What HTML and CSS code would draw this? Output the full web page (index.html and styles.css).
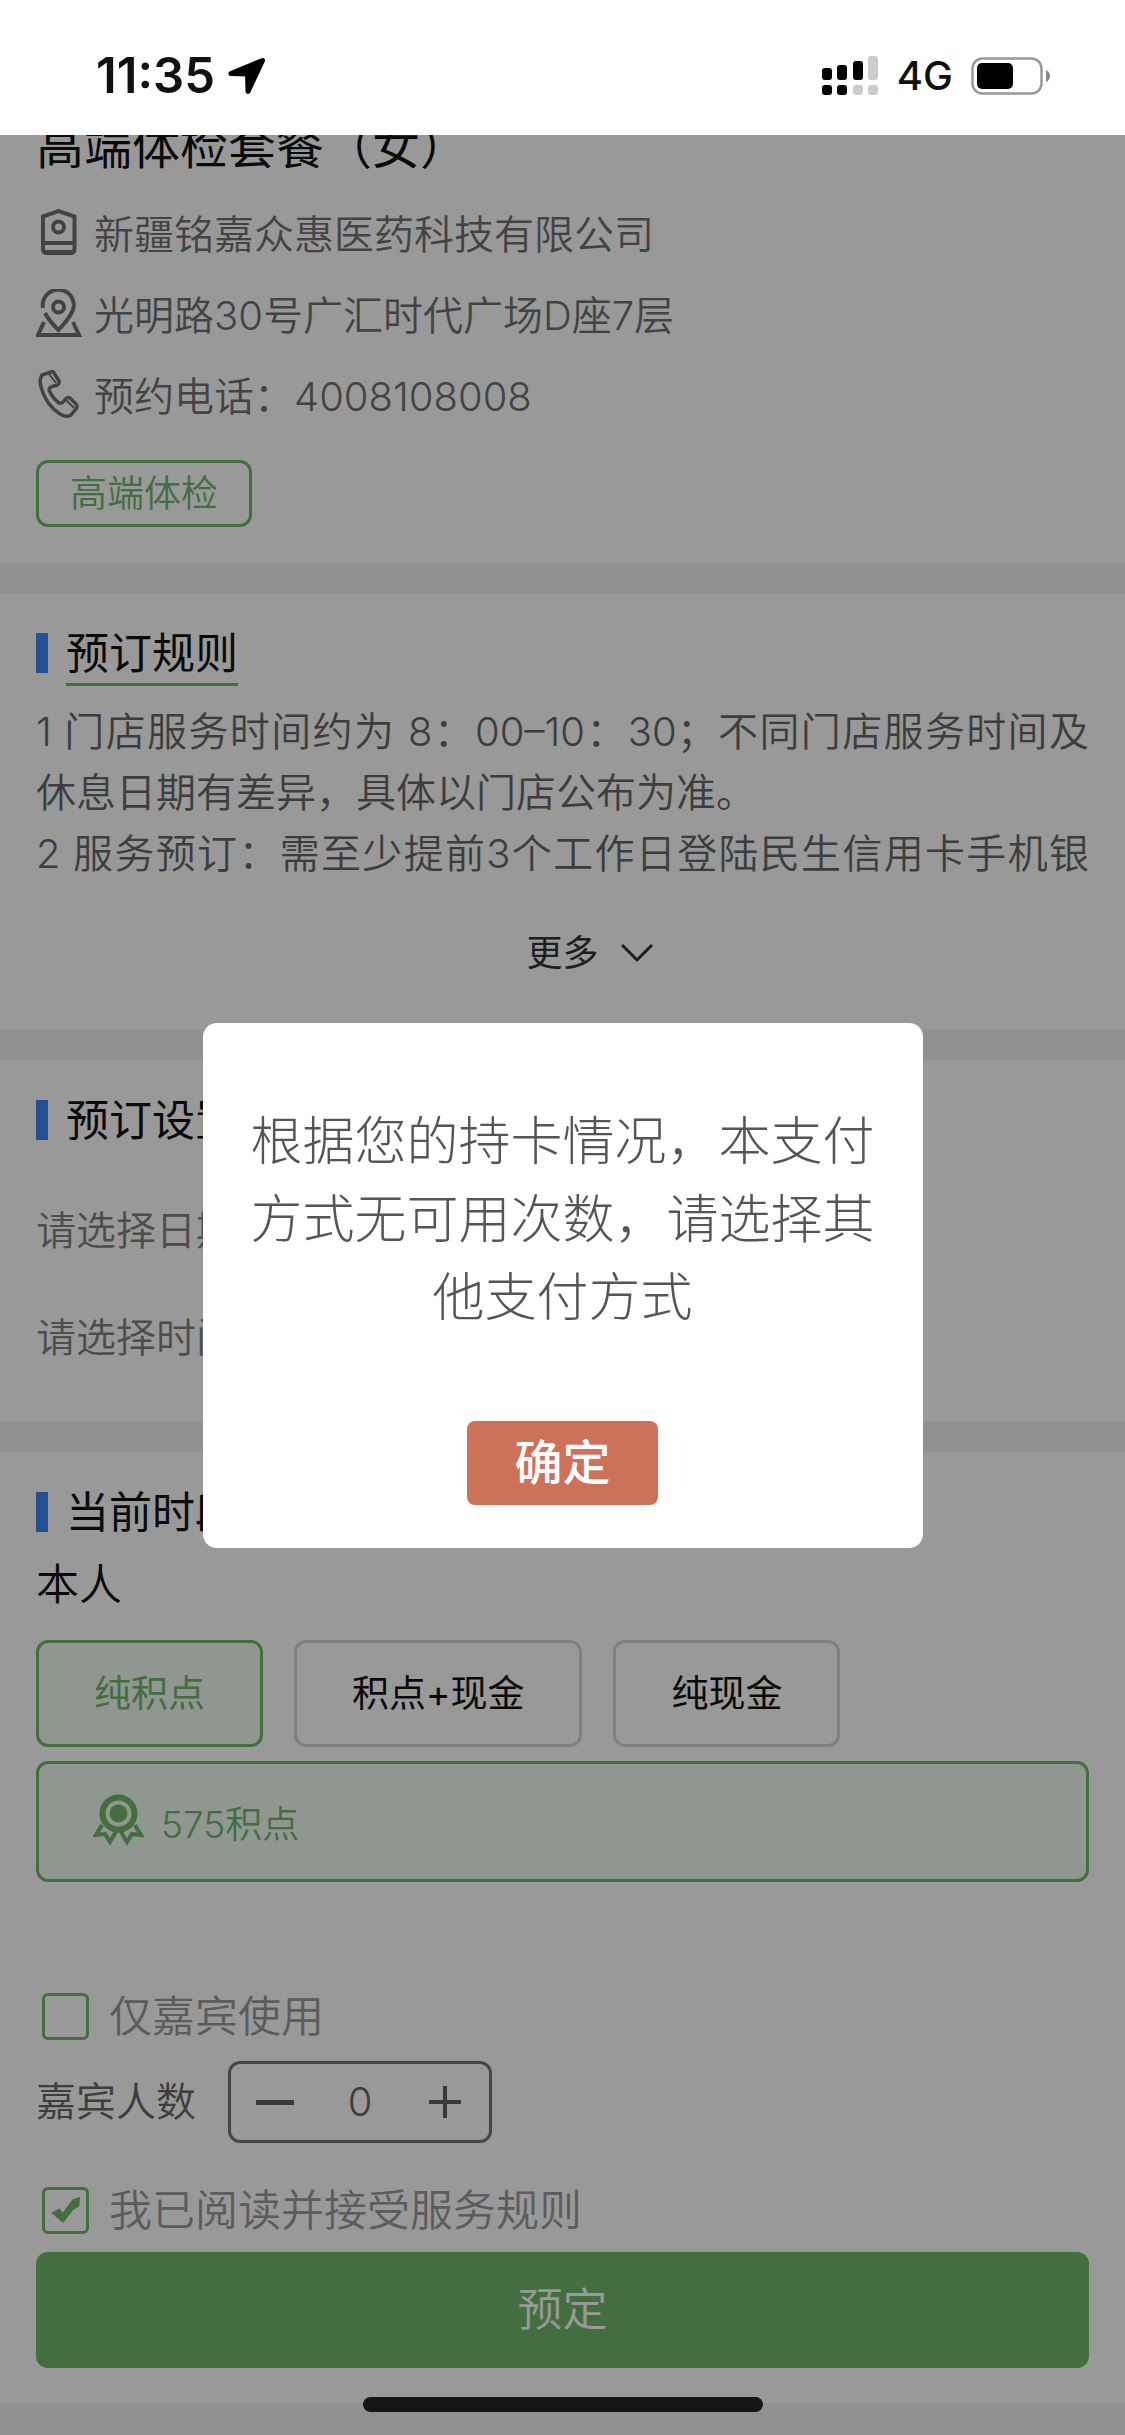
FILE: index.html
```html
<!DOCTYPE html>
<html lang="zh-CN">
<head>
    <meta charset="UTF-8">
    <meta name="viewport" content="width=device-width, initial-scale=1.0">
    <title>高端体检套餐（女）</title>
    <link rel="stylesheet" href="styles.css">
</head>
<body>
    <header class="status-bar">
        <div class="status-left">
            <span class="time">11:35</span>
            <svg width="38" height="38" viewBox="0 0 38 38"><path d="M34.500 3.500L3 16.500L19.500 17L20 34.500Z" fill="#000" stroke="#000" stroke-width="5" stroke-linejoin="round"/></svg>
        </div>
        <div class="status-right">
            <svg width="57" height="40" viewBox="0 0 57 40">
                <g fill="#000">
                    <rect x="0" y="12" width="10" height="12" rx="3"/>
                    <rect x="15" y="9" width="10" height="15" rx="3"/>
                    <rect x="31" y="5" width="10" height="19" rx="3"/>
                    <rect x="0" y="29" width="10" height="10" rx="3"/>
                    <rect x="15" y="29" width="10" height="10" rx="3"/>
                </g>
                <g fill="#ccc">
                    <rect x="46" y="0" width="10" height="24" rx="3"/>
                    <rect x="31" y="29" width="10" height="10" rx="3"/>
                    <rect x="46" y="29" width="10" height="10" rx="3"/>
                </g>
            </svg>
            <span class="network">4G</span>
            <svg width="79" height="38" viewBox="0 0 79 38">
                <rect x="1.5" y="1.5" width="69" height="35" rx="10" fill="none" stroke="#999" stroke-width="2.5"/>
                <rect x="6" y="6" width="36" height="26" rx="5" fill="#000"/>
                <path d="M75 13Q79 15 79 19Q79 23 75 25Z" fill="#888"/>
            </svg>
        </div>
    </header>

    <main>
        <section class="card shop">
            <h1>高端体检套餐（女）</h1>
            <ul class="info">
                <li>
                    <svg width="46" height="48" viewBox="0 0 46 48" fill="none" stroke="#717171" stroke-width="4">
                        <path d="M7 8.500L22.500 3L38.500 8.500V41Q38.500 45 34.500 45H11Q7 45 7 41Z"/>
                        <path d="M7 35H38M9 44H37"/>
                        <circle cx="22.500" cy="19" r="5.500"/>
                    </svg>
                    <span>新疆铭嘉众惠医药科技有限公司</span>
                </li>
                <li>
                    <svg width="46" height="48" viewBox="0 0 46 48" fill="none" stroke="#717171" stroke-width="4">
                        <path d="M7 19A15.500 15.500 0 1 1 35 25Q31 32 22.500 41Q14 33 9 24"/>
                        <circle cx="22.500" cy="18" r="5.500"/>
                        <path d="M8 33L2 46H43L37 33"/>
                    </svg>
                    <span>光明路30号广汇时代广场D座7层</span>
                </li>
                <li>
                    <svg width="46" height="48" viewBox="0 0 46 48" fill="none" stroke="#717171" stroke-width="3.500" stroke-linejoin="round">
                        <path d="M6 5L15 2Q17 1 18 3L23 11Q24 15 18 16Q13 17 13 20Q17 29 23 33Q26 34 28 31Q31 26 34 28L40 34Q42 37 40 39L35 45Q31 48 24 44Q10 35 5 17Q3 10 6 5Z"/>
                        <path d="M13 4L20 13M30 30L38 38" stroke-width="2"/>
                    </svg>
                    <span>预约电话：4008108008</span>
                </li>
            </ul>
            <span class="tag">高端体检</span>
        </section>

        <section class="card rules">
            <h2><span class="underlined">预订规则</span></h2>
            <div class="rules-text">
                <p>1 门店服务时间约为 8：00–10：30；不同门店服务时间及休息日期有差异，具体以门店公布为准。</p>
                <p class="cut">2 服务预订：需至少提前3个工作日登陆民生信用卡手机银</p>
            </div>
            <button class="more" type="button">
                <span class="more-text">更多</span>
                <svg width="34" height="20" viewBox="0 0 34 20" fill="none" stroke="#333" stroke-width="3"><path d="M1 2L16 17L31 2"/></svg>
            </button>
        </section>

        <section class="card setting">
            <h2>预订设置</h2>
            <div class="pickers">
                <button class="picker" type="button">请选择日期</button>
                <button class="picker" type="button">请选择时间</button>
            </div>
        </section>

        <section class="card pay">
            <h2>当前时段</h2>
            <h3>本人</h3>
            <div class="pay-types">
                <button class="pay-type active" type="button">纯积点</button>
                <button class="pay-type" type="button">积点+现金</button>
                <button class="pay-type" type="button">纯现金</button>
            </div>
            <div class="points">
                <svg width="52" height="52" viewBox="0 0 52 52" fill="none" stroke="#6eb76b">
                    <path d="M9 31L3 41L12 40L17 48L24 36" stroke-width="4"/>
                    <path d="M42 31L48 41L39 40L34 48L27 36" stroke-width="4"/>
                    <circle cx="25.500" cy="19.500" r="16" stroke-width="6"/>
                    <circle cx="25.500" cy="19.500" r="9" fill="#6eb76b" stroke="none"/>
                </svg>
                <span>575积点</span>
            </div>

            <label class="check">
                <input type="checkbox">
                <span>仅嘉宾使用</span>
            </label>
            <div class="guests">
                <label for="guestCount">嘉宾人数</label>
                <div class="stepper">
                    <button type="button" aria-label="减少"><svg width="38" height="38" viewBox="0 0 38 38"><path d="M0 19.500H38" stroke="#5f5f5f" stroke-width="5"/></svg></button>
                    <input id="guestCount" type="text" inputmode="numeric" value="0">
                    <button type="button" aria-label="增加"><svg width="38" height="38" viewBox="0 0 38 38"><path d="M3 19H35M19 3V35" stroke="#5f5f5f" stroke-width="4"/></svg></button>
                </div>
            </div>
            <label class="check">
                <input type="checkbox" checked>
                <span>我已阅读并接受服务规则</span>
            </label>
            <button class="submit" type="button">预定</button>
        </section>
    </main>

    <div class="mask">
        <div class="dialog" role="dialog" aria-modal="true">
            <p>根据您的持卡情况，本支付方式无可用次数，请选择其他支付方式</p>
            <button class="confirm" type="button">确定</button>
        </div>
    </div>
    <div class="home-bar"></div>
</body>
</html>
```
FILE: styles.css
```css
* {
    box-sizing: border-box;
}

body {
    margin: 0;
    min-height: 100vh;
    background: #f2f2f2;
    color: #111;
    font-family: Inter, "Noto Sans CJK SC", sans-serif;
    font-size: 40px;
    font-weight: 350;
    line-height: 60px;
}

h1, h2, h3, p, ul {
    margin: 0;
    padding: 0;
    font-weight: inherit;
}

button, input {
    font: inherit;
    color: inherit;
    margin: 0;
    padding: 0;
    border: none;
    background: none;
}

svg {
    display: block;
    flex-shrink: 0;
}

/* Status bar */
.status-bar {
    position: sticky;
    top: 0;
    z-index: 20;
    display: flex;
    justify-content: space-between;
    height: 135px;
    padding: 16px 75px 0 96px;
    background: #fff;
}

.status-left, .status-right {
    display: flex;
    align-items: center;
}

.status-left {
    gap: 13px;
}

.status-right {
    gap: 18px;
}

.time {
    font-size: 49px;
    font-weight: 600;
}

.network {
    font-size: 40px;
    font-weight: 500;
}

/* Sections */
.card {
    padding: 30px 36px;
    margin-bottom: 30px;
    background: #fff;
}

h1 {
    font-size: 48px;
    font-weight: 400;
}

h2 {
    display: flex;
    gap: 18px;
    font-size: 43px;
    font-weight: 400;
}

h2::before {
    content: "";
    width: 12px;
    height: 40px;
    margin-top: 10px;
    background: #3c87f5;
}

.shop {
    margin-top: -18px;
    padding-top: 0;
    padding-bottom: 36px;
}

.info {
    margin: 17px 0 23px;
    list-style: none;
}

.info li {
    display: flex;
    align-items: center;
    gap: 12px;
    height: 81px;
    color: #717171;
}

.info svg {
    margin-bottom: 6px;
}

.tag {
    display: inline-block;
    padding: 0 31px;
    border: 3px solid #6eb76b;
    border-radius: 12px;
    color: #6eb76b;
    font-size: 37px;
    line-height: 61px;
    vertical-align: top;
}

.underlined {
    border-bottom: 3px solid #6eb76b;
}

.rules {
    padding-bottom: 47px;
}

.rules-text {
    margin-top: 15px;
    color: #666;
    line-height: 61px;
    text-align: justify;
}

.cut {
    text-align-last: justify;
}

.more {
    display: grid;
    grid-template-columns: 1fr auto 1fr;
    align-items: center;
    gap: 22px;
    width: 100%;
    margin-top: 39px;
    color: #333;
    font-size: 36px;
    font-weight: 400;
}

.more-text {
    grid-column: 2;
}

.pickers {
    margin-top: 27px;
}

.picker {
    display: block;
    width: 100%;
    height: 107px;
    color: #808080;
    text-align: left;
}

/* Payment */
h3 {
    margin-top: 12px;
    font-size: 43px;
}

.pay-types {
    display: flex;
    gap: 31px;
    margin-top: 26px;
}

.pay-type {
    height: 107px;
    padding: 0 55px;
    border: 3px solid #d5d5d5;
    border-radius: 12px;
    font-size: 37px;
    font-weight: 400;
}

.pay-type.active {
    border-color: #6eb76b;
    background: #f1faf1;
    color: #6eb76b;
}

.points {
    display: flex;
    align-items: center;
    gap: 16px;
    height: 121px;
    margin-top: 14px;
    padding: 0 54px;
    border: 3px solid #6eb76b;
    border-radius: 12px;
    background: #f1faf1;
    color: #6eb76b;
    font-size: 37px;
}

.points svg {
    margin-bottom: 4px;
}

.points span {
    padding-top: 6px;
}

.check {
    display: flex;
    align-items: center;
    gap: 20px;
    padding-left: 6px;
    color: #999;
    font-size: 43px;
}

.check input {
    appearance: none;
    display: grid;
    place-items: center;
    width: 47px;
    height: 47px;
    border: 3px solid #6eb76b;
    border-radius: 6px;
}

.check input:checked::before {
    content: "";
    width: 29px;
    height: 26px;
    background: #6eb76b;
    clip-path: polygon(0 61%, 30% 44%, 40% 61%, 74% 10%, 100% 0, 98% 36%, 77% 49%, 42% 100%);
}

.points + .check {
    margin-top: 104px;
}

.guests {
    display: flex;
    align-items: center;
    gap: 32px;
    margin: 15px 0 37px;
    color: #666;
}

.stepper {
    display: flex;
    align-items: center;
    justify-content: space-between;
    width: 264px;
    height: 82px;
    padding: 0 25px;
    border: 3px solid #777;
    border-radius: 12px;
}

.stepper input {
    width: 60px;
    text-align: center;
}

.submit {
    display: block;
    width: 100%;
    height: 116px;
    margin-top: 12px;
    border-radius: 12px;
    background: #6eb76b;
    color: #fff;
    font-size: 45px;
}

.setting {
    padding-bottom: 31px;
}

.pay {
    padding-bottom: 35px;
    margin-bottom: 0;
}

/* Dialog */
.mask {
    position: fixed;
    top: 135px;
    right: 0;
    bottom: 0;
    left: 0;
    z-index: 10;
    display: flex;
    align-items: center;
    justify-content: center;
    background: rgba(0, 0, 0, 0.4);
}

.dialog {
    width: 64%;
    padding: 80px 48px 43px;
    border-radius: 14px;
    background: #fff;
    text-align: center;
}

.dialog p {
    color: #555;
    font-size: 52px;
    font-weight: 300;
    line-height: 78px;
}

.confirm {
    width: 191px;
    height: 84px;
    margin-top: 84px;
    border-radius: 8px;
    background: #cd715a;
    color: #fff;
    font-size: 48px;
    font-weight: 500;
}

.home-bar {
    position: fixed;
    bottom: 23px;
    left: 50%;
    z-index: 30;
    width: 400px;
    height: 15px;
    margin-left: -200px;
    border-radius: 8px;
    background: #151515;
}
```
